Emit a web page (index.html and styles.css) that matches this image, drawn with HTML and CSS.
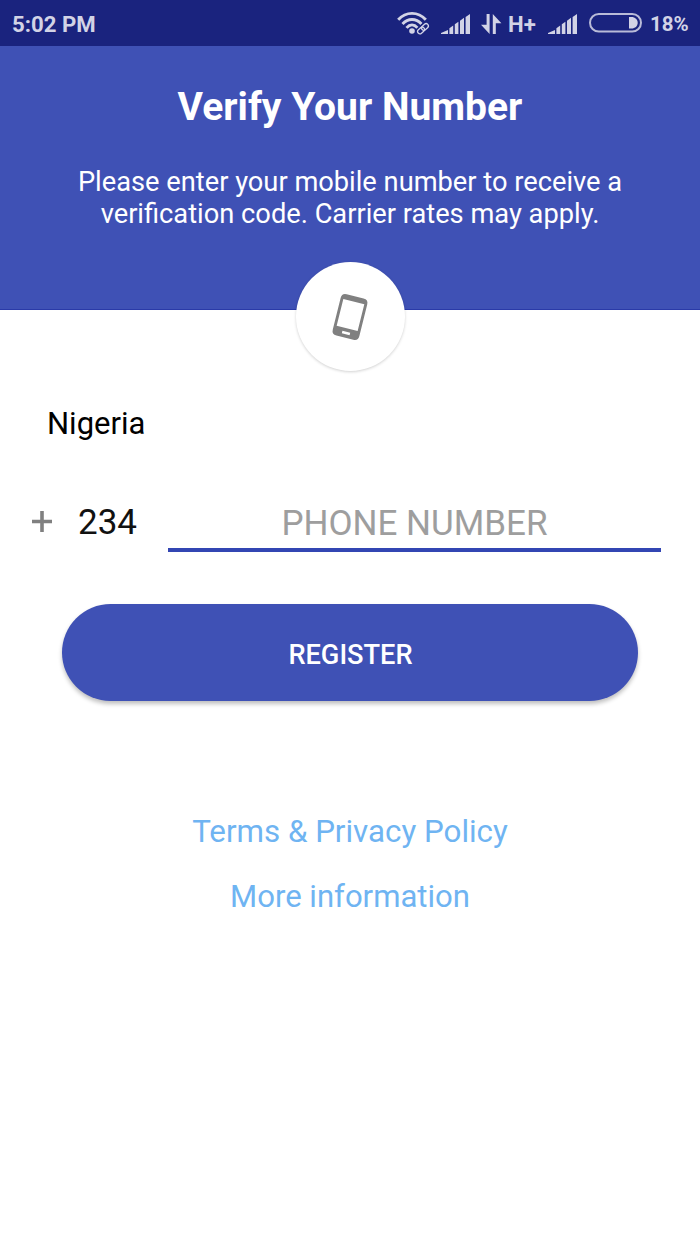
FILE: index.html
```html
<!DOCTYPE html>
<html lang="en">
<head>
    <meta charset="utf-8">
    <title>Verify Your Number</title>
    <link rel="stylesheet" href="styles.css">
</head>
<body>
    <div class="status-bar">
        <div class="clock">5:02 PM</div>
        <div class="status-icons">
            <svg class="wifi" width="34" height="24" viewBox="0 0 34 24">
                <g fill="none" stroke="#d2d3e6" stroke-width="2.9">
                    <path d="M1.2 8.8 C9 0.2 21 0.2 28.8 8.8"/>
                    <path d="M5.5 12.9 C11 7 19 7 24.5 12.9"/>
                    <path d="M9.5 16.9 C13 12.9 17 12.9 20.5 16.9"/>
                </g>
                <circle cx="15" cy="20" r="2.8" fill="#d2d3e6"/>
                <g fill="none" stroke="#1a237e" stroke-width="4">
                    <rect x="20" y="15.4" width="12" height="4.6" rx="2.3" transform="rotate(-42 26 17.7)"/>
                </g>
                <g fill="none" stroke="#d2d3e6" stroke-width="1.3">
                    <rect x="19.6" y="15.4" width="7.6" height="4.6" rx="2.3" transform="rotate(-42 26 17.7)"/>
                    <rect x="24.8" y="15.4" width="7.6" height="4.6" rx="2.3" transform="rotate(-42 26 17.7)"/>
                </g>
            </svg>
            <svg class="signal" width="30" height="20" viewBox="0 0 30 20">
                <path d="M0 20V19L7 16V20ZM8.4 20V14.2L12.2 11.6V20ZM13.8 20V10.2L17.4 7.7V20ZM19 20V6.8L23 3.8V20ZM24.6 20V3L29 0V20Z" fill="#d2d3e6"/>
            </svg>
            <svg class="data" width="21" height="20" viewBox="0 0 21 20">
                <path d="M5.6 0H8.6V20L0 10.8H5.6ZM11.8 0L20.4 9.2H14.8V20H11.8Z" fill="#d2d3e6"/>
            </svg>
            <span class="network">H+</span>
            <svg class="signal" width="30" height="20" viewBox="0 0 30 20">
                <path d="M0 20V19L7 16V20ZM8.4 20V14.2L12.2 11.6V20ZM13.8 20V10.2L17.4 7.7V20ZM19 20V6.8L23 3.8V20ZM24.6 20V3L29 0V20Z" fill="#d2d3e6"/>
            </svg>
            <svg class="battery" width="53" height="20" viewBox="0 0 53 20">
                <rect x="1" y="1" width="51" height="17.6" rx="8.8" fill="none" stroke="#b9bbd8" stroke-width="2"/>
                <path d="M40 4H42.5C46 4 48.7 6.5 48.7 9.8S46 15.6 42.5 15.6H40Z" fill="#d2d3e6"/>
            </svg>
            <span class="percent">18%</span>
        </div>
    </div>

    <div class="header">
        <h1 class="title">Verify Your Number</h1>
        <p class="subtitle">Please enter your mobile number to receive a<br>verification code. Carrier rates may apply.</p>
        <div class="badge">
            <svg width="40" height="50" viewBox="-20 -25 40 50">
                <g transform="rotate(14)">
                    <path fill="#808080" fill-rule="evenodd" d="M-8.7 -21.2H8.7Q13.7 -21.2 13.7 -16.2V16.2Q13.7 21.2 8.7 21.2H-8.7Q-13.7 21.2 -13.7 16.2V-16.2Q-13.7 -21.2 -8.7 -21.2ZM-10.8 -15.8V11.8H10.8V-15.8ZM-4 15.2V17.8H4V15.2Z"/>
                </g>
            </svg>
        </div>
    </div>

    <div class="form">
        <div class="country">Nigeria</div>
        <div class="phone-row">
            <svg class="plus" width="20" height="21" viewBox="0 0 20 21">
                <path d="M0 10.5H20M10 0V21" stroke="#808080" stroke-width="3.6"/>
            </svg>
            <div class="code">234</div>
            <input class="phone" type="tel" placeholder="PHONE NUMBER">
        </div>
        <button class="register">REGISTER</button>
    </div>

    <div class="links">
        <a class="terms">Terms &amp; Privacy Policy</a>
        <a class="more">More information</a>
    </div>
</body>
</html>
```
FILE: styles.css
```css
* {
    box-sizing: border-box;
}
body {
    margin: 0;
    min-height: 1244px;
    background: #fff;
    color: #000;
    font-family: Roboto, "Noto Sans", sans-serif;
}
.status-bar {
    display: flex;
    justify-content: space-between;
    height: 46px;
    padding: 0 12px;
    background: #1a237e;
    color: #d2d3e6;
    font-size: 22.2px;
    font-weight: bold;
    line-height: 48px;
}
.status-icons {
    display: flex;
}
.wifi {
    margin: 11px 10px 0 0;
}
.signal {
    margin-top: 14px;
}
.data {
    margin: 14px 6px 0 10px;
}
.network {
    width: 28px;
    margin-right: 12px;
}
.battery {
    margin: 13px 8px 0 11px;
}
.percent {
    width: 38px;
    font-size: 20.5px;
    white-space: nowrap;
}
.header {
    position: relative;
    height: 264px;
    padding-top: 37px;
    background: #3f51b5;
    border-bottom: 1px solid #2a3aa8;
    color: #fff;
    text-align: center;
}
.title {
    margin: 0;
    font-size: 39px;
    font-weight: bold;
    line-height: 48px;
}
.subtitle {
    margin: 35px 0 0;
    font-size: 27.25px;
    line-height: 32px;
}
.badge {
    position: absolute;
    left: 50%;
    bottom: -62px;
    display: flex;
    align-items: center;
    justify-content: center;
    width: 109px;
    height: 109px;
    margin-left: -54.5px;
    border-radius: 50%;
    background: #fff;
    box-shadow: 0 1px 3px rgba(0,0,0,0.18);
}
.form {
    padding: 94px 39px 0 32px;
}
.country {
    margin-left: 15px;
    font-size: 31px;
    line-height: 40px;
}
.phone-row {
    display: flex;
    height: 56px;
    margin-top: 52px;
}
.plus {
    margin-top: 15px;
}
.code {
    width: 90px;
    margin-left: 26px;
    font-size: 35px;
    line-height: 54px;
    color: #111;
}
.phone {
    flex: 1;
    min-width: 0;
    height: 56px;
    padding: 2px 0 0;
    border: 0;
    border-bottom: 4px solid #3346b3;
    border-radius: 0;
    outline: none;
    background: none;
    font: 35px Roboto, sans-serif;
    text-align: center;
}
.phone::placeholder {
    color: #9e9e9e;
}
.register {
    display: block;
    width: 576px;
    height: 97px;
    margin: 52px 0 0 30px;
    padding: 4px 0 0 1px;
    border: 0;
    border-radius: 49px;
    background: #3f51b5;
    box-shadow: 0 3px 4px rgba(0,0,0,0.25);
    color: #fff;
    font: 500 27.2px Roboto, sans-serif;
}
.links {
    display: flex;
    flex-direction: column;
    align-items: center;
    gap: 25px;
    margin-top: 111px;
    font-size: 31.3px;
    line-height: 40px;
    color: #6fb4f2;
}
.more {
    font-size: 31.1px;
}
```
